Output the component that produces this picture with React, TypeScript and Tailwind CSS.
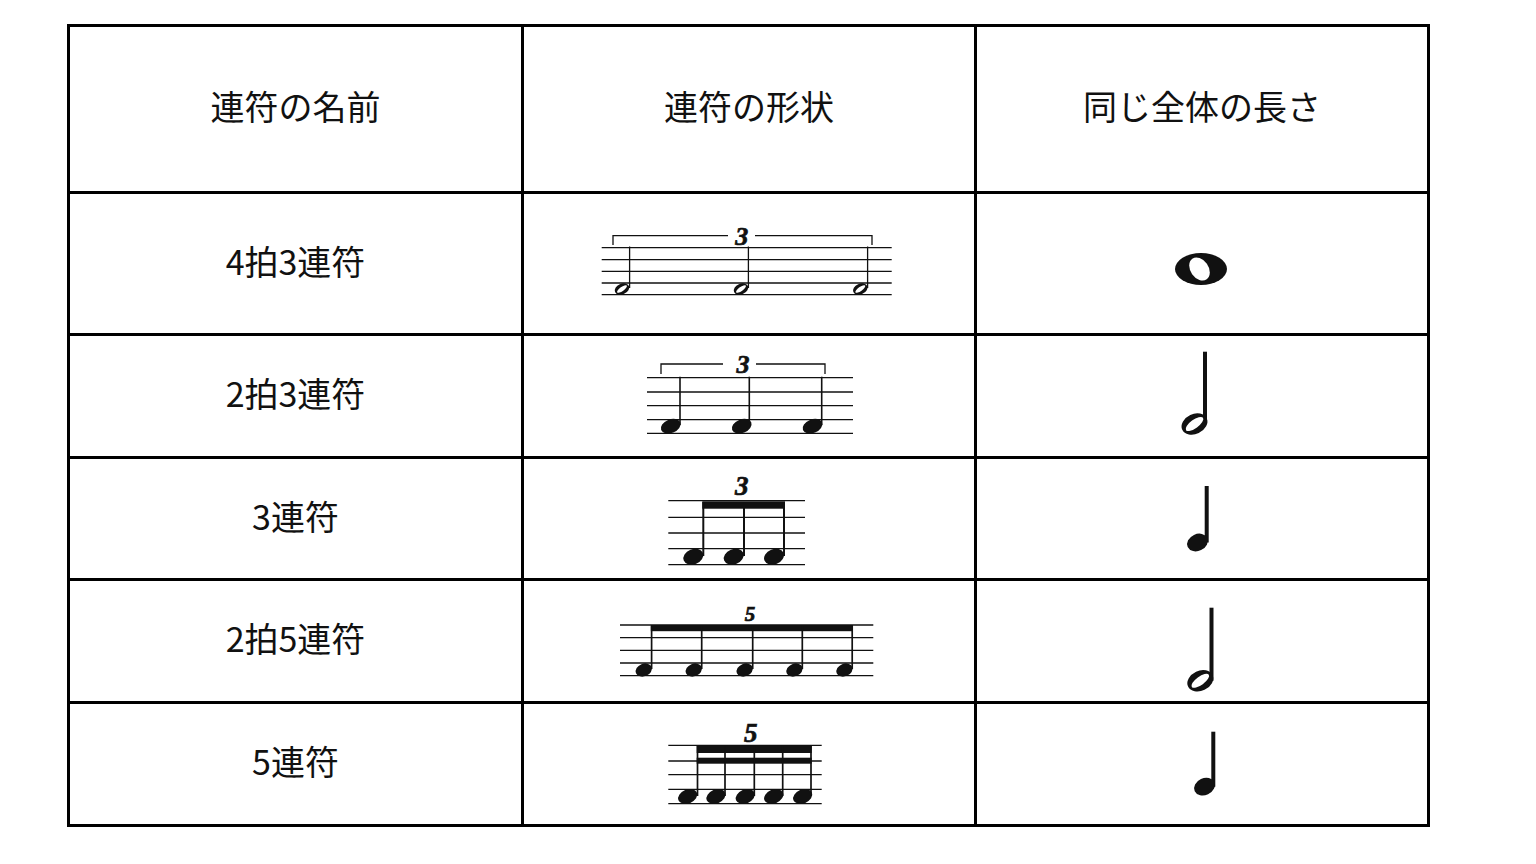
import React from 'react';

// page-coordinate boxes of the cells, used as svg viewBoxes
const COL2 = { x: 524, w: 450 };
const COL3 = { x: 977, w: 450 };
const ROWS = [
  { y: 194, h: 139 },
  { y: 336, h: 120 },
  { y: 459, h: 119 },
  { y: 581, h: 120 },
  { y: 704, h: 120 },
];

const INK = '#111';

type Head = { cx: number; cy: number; rx: number; ry: number };

const FilledHead = ({ cx, cy, rx, ry }: Head) => (
  <ellipse cx={cx} cy={cy} rx={rx} ry={ry} fill={INK} transform={`rotate(-22 ${cx} ${cy})`} />
);

const HollowHead = ({ cx, cy, rx, ry }: Head) => (
  <g>
    <ellipse cx={cx} cy={cy} rx={rx} ry={ry} fill={INK} transform={`rotate(-24 ${cx} ${cy})`} />
    <ellipse cx={cx} cy={cy} rx={rx * 0.78} ry={ry * 0.38} fill="#fff" transform={`rotate(-36 ${cx} ${cy})`} />
  </g>
);

const Staff = ({ lines, x1, x2 }: { lines: number[]; x1: number; x2: number }) => (
  <g stroke={INK} strokeWidth={1.3}>
    {lines.map(y => (
      <line key={y} x1={x1} x2={x2} y1={y} y2={y} />
    ))}
  </g>
);

const Bracket = ({ x1, x2, y, tip, g1, g2 }: { x1: number; x2: number; y: number; tip: number; g1: number; g2: number }) => (
  <g stroke={INK} strokeWidth={1.3} fill="none">
    <polyline points={`${x1},${tip} ${x1},${y} ${g1},${y}`} />
    <polyline points={`${g2},${y} ${x2},${y} ${x2},${tip}`} />
  </g>
);

const Num = ({ x, y, size, children }: { x: number; y: number; size: number; children: string }) => (
  <text
    x={x}
    y={y}
    textAnchor="middle"
    fontFamily='"Liberation Serif", "DejaVu Serif", serif'
    fontWeight="bold"
    fontStyle="italic"
    fontSize={size}
    fill={INK}
    stroke={INK}
    strokeWidth={0.7}
  >
    {children}
  </text>
);

const Stem = ({ x, y1, y2, w }: { x: number; y1: number; y2: number; w: number }) => (
  <line x1={x} x2={x} y1={y1} y2={y2} stroke={INK} strokeWidth={w} />
);

const Svg = ({ col, row, children }: { col: { x: number; w: number }; row: number; children: React.ReactNode }) => (
  <svg className="block w-full h-full" viewBox={`${col.x} ${ROWS[row].y} ${col.w} ${ROWS[row].h}`}>
    {children}
  </svg>
);

// 4拍3連符: three half notes under a bracket
const Shape1 = () => {
  const heads = [622, 741, 860.3];
  const stems = [629.6, 748.4, 867.6];
  return (
    <Svg col={COL2} row={0}>
      <Staff lines={[247.7, 259.7, 271.3, 283, 294.7]} x1={601.7} x2={891.7} />
      <Bracket x1={613} x2={872} y={235.7} tip={245} g1={728} g2={755} />
      <Num x={741.7} y={245} size={26}>3</Num>
      {stems.map(x => <Stem key={x} x={x} y1={246.5} y2={288} w={1.3} />)}
      {heads.map(x => <HollowHead key={x} cx={x} cy={289} rx={7.6} ry={5.3} />)}
    </Svg>
  );
};

// 2拍3連符: three quarter notes under a bracket
const Shape2 = () => {
  const heads = [670.7, 741.7, 812.5];
  const stems = [680, 749.3, 821.7];
  return (
    <Svg col={COL2} row={1}>
      <Staff lines={[377.7, 392, 405.7, 419.7, 433.3]} x1={647} x2={853} />
      <Bracket x1={661} x2={825} y={364} tip={374} g1={723} g2={756} />
      <Num x={743} y={373} size={26}>3</Num>
      {stems.map(x => <Stem key={x} x={x} y1={376.7} y2={425} w={1.6} />)}
      {heads.map(x => <FilledHead key={x} cx={x} cy={426.2} rx={10.3} ry={6.8} />)}
    </Svg>
  );
};

// 3連符: three beamed eighth notes
const Shape3 = () => {
  const heads = [693.3, 733.7, 774];
  const stems = [703.3, 744, 784];
  return (
    <Svg col={COL2} row={2}>
      <Staff lines={[500.7, 517.3, 533, 548.7, 564.7]} x1={668.3} x2={805} />
      <rect x={702.3} y={501.3} width={82.7} height={7.4} fill={INK} />
      <Num x={741.7} y={495.3} size={27}>3</Num>
      {stems.map(x => <Stem key={x} x={x} y1={502} y2={556} w={2} />)}
      {heads.map(x => <FilledHead key={x} cx={x} cy={556.7} rx={10.3} ry={7.6} />)}
    </Svg>
  );
};

// 2拍5連符: five beamed eighth notes
const Shape4 = () => {
  const heads = [643.8, 693.8, 744.7, 794.5, 844.5];
  const stems = [651.6, 701.7, 752.7, 802.3, 852.2];
  return (
    <Svg col={COL2} row={3}>
      <Staff lines={[625, 637.7, 650.3, 663, 675.7]} x1={620} x2={873.3} />
      <rect x={650.8} y={625} width={202.2} height={6.2} fill={INK} />
      <Num x={750} y={621} size={21}>5</Num>
      {stems.map(x => <Stem key={x} x={x} y1={626} y2={669} w={1.7} />)}
      {heads.map(x => <FilledHead key={x} cx={x} cy={670} rx={8.4} ry={6.3} />)}
    </Svg>
  );
};

// 5連符: five beamed sixteenth notes
const Shape5 = () => {
  const heads = [687.7, 716, 745.3, 773.7, 802.7];
  const stems = [697.5, 725, 754.3, 782.7, 811];
  return (
    <Svg col={COL2} row={4}>
      <Staff lines={[745.3, 761, 774.7, 789.3, 803.7]} x1={668.3} x2={821.7} />
      <rect x={696.7} y={745.3} width={115} height={7.7} fill={INK} />
      <rect x={696.7} y={757.7} width={115} height={6} fill={INK} />
      <Num x={750.7} y={742} size={27}>5</Num>
      {stems.map(x => <Stem key={x} x={x} y1={746} y2={796} w={1.7} />)}
      {heads.map(x => <FilledHead key={x} cx={x} cy={796.5} rx={10} ry={6.9} />)}
    </Svg>
  );
};

const WholeNote = () => (
  <Svg col={COL3} row={0}>
    <ellipse cx={1201} cy={269} rx={26} ry={16} fill={INK} />
    <ellipse cx={1199.5} cy={269} rx={9} ry={12.5} fill="#fff" transform="rotate(-35 1199.5 269)" />
  </Svg>
);

const HalfNote = ({ row, stemX, top, cx, cy }: { row: number; stemX: number; top: number; cx: number; cy: number }) => (
  <Svg col={COL3} row={row}>
    <Stem x={stemX} y1={top} y2={cy} w={4} />
    <ellipse cx={cx} cy={cy} rx={13.5} ry={10} fill={INK} transform={`rotate(-25 ${cx} ${cy})`} />
    <ellipse cx={cx} cy={cy} rx={10.5} ry={4.2} fill="#fff" transform={`rotate(-36 ${cx} ${cy})`} />
  </Svg>
);

const QuarterNote = ({ row, stemX, top, cx, cy }: { row: number; stemX: number; top: number; cx: number; cy: number }) => (
  <Svg col={COL3} row={row}>
    <Stem x={stemX} y1={top} y2={cy} w={4} />
    <ellipse cx={cx} cy={cy} rx={10.8} ry={8.4} fill={INK} transform={`rotate(-25 ${cx} ${cy})`} />
  </Svg>
);

const rows: { name: string; shape: React.ReactNode; same: React.ReactNode; h: string }[] = [
  { name: '4拍3連符', shape: <Shape1 />, same: <WholeNote />, h: 'h-[142px] border-b-[3px]' },
  {
    name: '2拍3連符',
    shape: <Shape2 />,
    same: <HalfNote row={1} stemX={1205} top={351.7} cx={1194.5} cy={424} />,
    h: 'h-[123px] border-b-[3px]',
  },
  {
    name: '3連符',
    shape: <Shape3 />,
    same: <QuarterNote row={2} stemX={1206.7} top={486} cx={1197.5} cy={542.5} />,
    h: 'h-[122px] border-b-[3px]',
  },
  {
    name: '2拍5連符',
    shape: <Shape4 />,
    same: <HalfNote row={3} stemX={1211.5} top={607.7} cx={1200.3} cy={680.8} />,
    h: 'h-[123px] border-b-[3px]',
  },
  {
    name: '5連符',
    shape: <Shape5 />,
    same: <QuarterNote row={4} stemX={1213.3} top={731.7} cx={1204.5} cy={786.7} />,
    h: 'h-[120px]',
  },
];

export default function App() {
  return (
    <div
      className="min-h-screen bg-white pt-[24px] pl-[67px] text-[#111]"
      style={{ fontFamily: '"Noto Sans CJK JP", "Noto Sans", sans-serif' }}
    >
      <div className="w-[1363px] border-[3px] border-black">
        <div className="grid grid-cols-[454px_453px_1fr] h-[167px] border-b-[3px] border-black text-[34px] leading-none">
          <div className="flex items-center justify-center pb-[6px] border-r-[3px] border-black">連符の名前</div>
          <div className="flex items-center justify-center pb-[6px] border-r-[3px] border-black">連符の形状</div>
          <div className="flex items-center justify-center pb-[6px]">同じ全体の長さ</div>
        </div>
        {rows.map(r => (
          <div key={r.name} className={`grid grid-cols-[454px_453px_1fr] border-black ${r.h}`}>
            <div className="flex items-center justify-center pb-[6px] border-r-[3px] border-black text-[34px] leading-none">
              {r.name}
            </div>
            <div className="border-r-[3px] border-black">{r.shape}</div>
            <div>{r.same}</div>
          </div>
        ))}
      </div>
    </div>
  );
}
